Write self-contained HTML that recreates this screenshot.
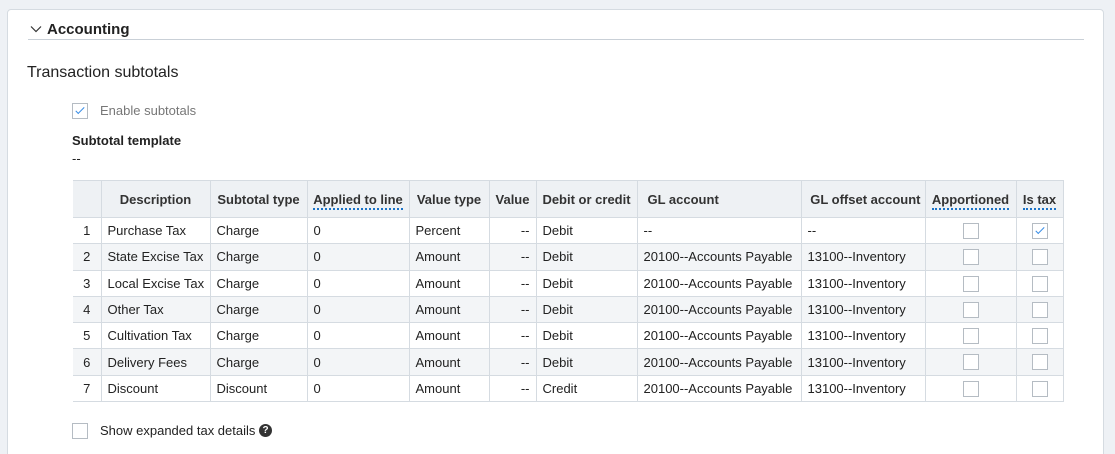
<!DOCTYPE html>
<html><head><style>
html,body{margin:0;width:1115px;height:454px;overflow:hidden}
body{background:#eef1f5;font-family:"Liberation Sans",sans-serif;color:#222;position:relative}
.card{position:absolute;left:7px;top:9px;width:1095px;height:450px;background:#fff;border:1px solid #d5dbe1;border-radius:4px}
.abs{position:absolute}
.hd{left:28px;top:21px;width:1056px;height:18px;border-bottom:1px solid #c9d0d7;font-size:15px;font-weight:bold}
table{position:absolute;left:73px;top:180px;border-collapse:collapse;font-size:13px;table-layout:fixed;width:990px}
td,th{border:1px solid #d5dbe1;height:25.3px;padding:0 6px;white-space:nowrap;overflow:hidden}
th{height:36px;background:#eef1f4;font-weight:bold;font-size:13px;color:#333;padding:0 4px}
tr:nth-child(odd) td{background:#f3f5f7}
tr td:first-child,th:first-child{border-left:none;text-align:center}
.u{border-bottom:2px dotted #1a73c8;padding-bottom:1px}
.cb{display:inline-block;width:16px;height:16px;border:1px solid #b5bcc3;background:#fff;vertical-align:middle;position:relative;box-sizing:border-box}
.ck::after{content:"";position:absolute;left:5px;top:1px;width:3px;height:8px;border:solid #3a8ee6;border-width:0 1.5px 1.5px 0;transform:rotate(45deg)}
.c{text-align:center}.r{text-align:right}
</style></head><body>
<div class="card"></div>
<div class="abs hd"><svg width="12" height="8" style="margin:0 5px 1px 2px" viewBox="0 0 12 8"><path d="M1 1.5 L6 6.5 L11 1.5" fill="none" stroke="#333" stroke-width="1.2"/></svg>Accounting</div>
<div class="abs" style="left:27px;top:64px;font-size:16px">Transaction subtotals</div>
<div class="abs" style="left:72px;top:102px;font-size:13px;color:#777"><span class="cb ck"></span><span style="margin-left:12px;vertical-align:middle">Enable subtotals</span></div>
<div class="abs" style="left:72px;top:133px;font-size:13px;font-weight:bold">Subtotal template</div>
<div class="abs" style="left:72px;top:151px;font-size:13px">--</div>
<table>
<colgroup><col style="width:28px"><col style="width:109px"><col style="width:97px"><col style="width:102px"><col style="width:80px"><col style="width:47px"><col style="width:101px"><col style="width:164px"><col style="width:124px"><col style="width:91px"><col style="width:47px"></colgroup>
<tr><th></th><th>Description</th><th>Subtotal type</th><th><span class="u">Applied to line</span></th><th>Value type</th><th>Value</th><th>Debit or credit</th><th style="text-align:left;padding-left:10px">GL account</th><th style="text-align:right">GL offset account</th><th><span class="u">Apportioned</span></th><th><span class="u">Is tax</span></th></tr>
<tr><td>1</td><td>Purchase Tax</td><td>Charge</td><td>0</td><td>Percent</td><td class="r">--</td><td>Debit</td><td>--</td><td>--</td><td class="c"><span class="cb"></span></td><td class="c"><span class="cb ck"></span></td></tr>
<tr><td>2</td><td>State Excise Tax</td><td>Charge</td><td>0</td><td>Amount</td><td class="r">--</td><td>Debit</td><td>20100--Accounts Payable</td><td>13100--Inventory</td><td class="c"><span class="cb"></span></td><td class="c"><span class="cb"></span></td></tr>
<tr><td>3</td><td>Local Excise Tax</td><td>Charge</td><td>0</td><td>Amount</td><td class="r">--</td><td>Debit</td><td>20100--Accounts Payable</td><td>13100--Inventory</td><td class="c"><span class="cb"></span></td><td class="c"><span class="cb"></span></td></tr>
<tr><td>4</td><td>Other Tax</td><td>Charge</td><td>0</td><td>Amount</td><td class="r">--</td><td>Debit</td><td>20100--Accounts Payable</td><td>13100--Inventory</td><td class="c"><span class="cb"></span></td><td class="c"><span class="cb"></span></td></tr>
<tr><td>5</td><td>Cultivation Tax</td><td>Charge</td><td>0</td><td>Amount</td><td class="r">--</td><td>Debit</td><td>20100--Accounts Payable</td><td>13100--Inventory</td><td class="c"><span class="cb"></span></td><td class="c"><span class="cb"></span></td></tr>
<tr><td>6</td><td>Delivery Fees</td><td>Charge</td><td>0</td><td>Amount</td><td class="r">--</td><td>Debit</td><td>20100--Accounts Payable</td><td>13100--Inventory</td><td class="c"><span class="cb"></span></td><td class="c"><span class="cb"></span></td></tr>
<tr><td>7</td><td>Discount</td><td>Discount</td><td>0</td><td>Amount</td><td class="r">--</td><td>Credit</td><td>20100--Accounts Payable</td><td>13100--Inventory</td><td class="c"><span class="cb"></span></td><td class="c"><span class="cb"></span></td></tr>
</table>
<div class="abs" style="left:72px;top:422px;font-size:13px"><span class="cb"></span><span style="margin-left:12px;vertical-align:middle">Show expanded tax details</span> <span style="display:inline-block;width:13px;height:13px;border-radius:50%;background:#333;color:#fff;font-size:10px;font-weight:bold;text-align:center;line-height:13px;vertical-align:middle">?</span></div>
</body></html>
